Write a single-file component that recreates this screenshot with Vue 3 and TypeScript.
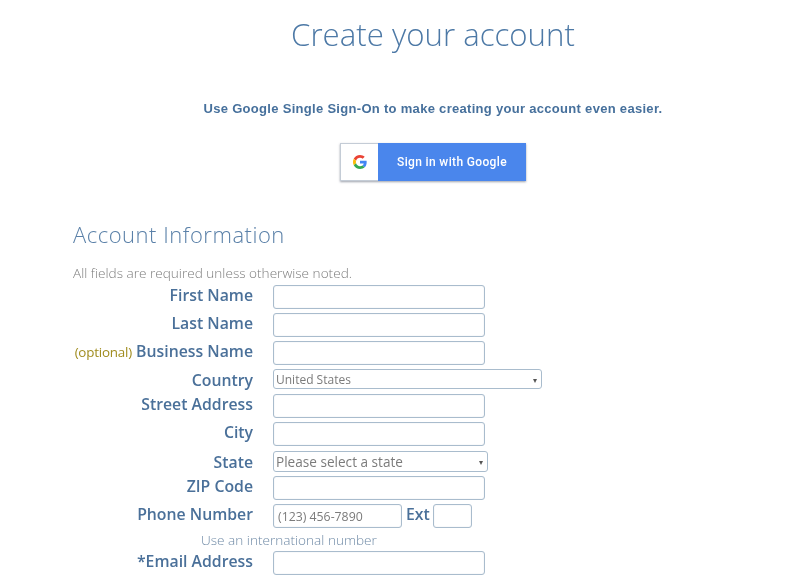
<script setup lang="ts">
interface Row {
  label: string
  optional?: boolean
  kind: 'input' | 'country' | 'state' | 'phone'
  rowClass: string
}
const rows: Row[] = [
  { label: 'First Name', kind: 'input', rowClass: 'r28' },
  { label: 'Last Name', kind: 'input', rowClass: 'r28' },
  { label: 'Business Name', optional: true, kind: 'input', rowClass: 'r29' },
  { label: 'Country', kind: 'country', rowClass: 'r24' },
  { label: 'Street Address', kind: 'input', rowClass: 'r28' },
  { label: 'City', kind: 'input', rowClass: 'r30' },
  { label: 'State', kind: 'state', rowClass: 'r24' },
  { label: 'ZIP Code', kind: 'input', rowClass: 'r28' },
  { label: 'Phone Number', kind: 'phone', rowClass: 'r26' },
]
</script>

<template>
  <main class="page">
    <h1 class="title">Create your account</h1>
    <p class="sso">Use Google Single Sign-On to make creating your account even easier.</p>
    <div class="google-wrap">
      <button class="google" type="button">
        <span class="g-box">
          <svg width="14" height="14" viewBox="0 0 48 48" aria-hidden="true">
            <path fill="#EA4335" d="M24 9.5c3.5 0 6.7 1.2 9.2 3.6l6.9-6.9C35.9 2.4 30.5 0 24 0 14.6 0 6.5 5.4 2.6 13.2l8 6.2C12.5 13.7 17.8 9.5 24 9.5z"/>
            <path fill="#4285F4" d="M46.9 24.5c0-1.6-.1-3.1-.4-4.5H24v9h12.9c-.6 3-2.2 5.5-4.8 7.2l7.7 6c4.5-4.2 7.1-10.3 7.1-17.7z"/>
            <path fill="#FBBC05" d="M10.6 28.6c-.5-1.4-.8-3-.8-4.6s.3-3.2.8-4.6l-8-6.2C.9 16.5 0 20.1 0 24s.9 7.5 2.6 10.8l8-6.2z"/>
            <path fill="#34A853" d="M24 48c6.5 0 11.9-2.1 15.9-5.8l-7.7-6c-2.2 1.4-4.9 2.3-8.2 2.3-6.2 0-11.5-4.2-13.4-9.9l-8 6.2C6.5 42.6 14.6 48 24 48z"/>
          </svg>
        </span>
        <span class="g-text">Sign in with Google</span>
      </button>
    </div>

    <section class="account">
      <h2 class="section-title">Account Information</h2>
      <p class="note">All fields are required unless otherwise noted.</p>
      <div class="form">
        <div v-for="row in rows" :key="row.label" class="row" :class="row.rowClass">
          <label class="label">
            <span v-if="row.optional" class="optional">(optional)</span>
            {{ row.label }}
          </label>
          <div v-if="row.kind === 'input'" class="input"></div>
          <div v-else-if="row.kind === 'country'" class="select country">
            <span>United States</span><span class="arrow">▾</span>
          </div>
          <div v-else-if="row.kind === 'state'" class="select state">
            <span>Please select a state</span><span class="arrow">▾</span>
          </div>
          <div v-else class="phone">
            <div class="input phone-input">(123) 456-7890</div>
            <span class="ext-label">Ext</span>
            <div class="input ext"></div>
          </div>
        </div>
        <p class="hint">Use an international number</p>
        <div class="row r28">
          <label class="label">*Email Address</label>
          <div class="input"></div>
        </div>
      </div>
    </section>
  </main>
</template>

<style>
html, body { margin: 0; background: #fff; overflow: hidden; }
</style>

<style scoped>
.page {
  width: 800px;
  height: 578px;
  overflow: hidden;
  font-family: "Open Sans", "Liberation Sans", sans-serif;
  box-sizing: border-box;
  padding-top: 12px;
  filter: blur(0.4px);
}
.title {
  margin: 0 0 0 66px;
  text-align: center;
  font-size: 31.2px;
  line-height: 44px;
  font-weight: 300;
  color: #4d79a6;
}
.sso {
  margin: 44px 0 0 66px;
  text-align: center;
  font-family: "Liberation Sans", Arial, sans-serif;
  font-size: 13px;
  letter-spacing: 0.3px;
  line-height: 18px;
  font-weight: 700;
  color: #46709c;
}
.google-wrap {
  margin: 25px 0 0 340px;
}
.google {
  display: flex;
  width: 186px;
  height: 38px;
  padding: 0;
  border: 0;
  background: #4a86ec;
  box-shadow: 0 1px 2px rgba(60, 70, 90, 0.5);
  font-family: "Roboto", "Liberation Sans", sans-serif;
}
.g-box {
  width: 38px;
  height: 38px;
  box-sizing: border-box;
  border: 1px solid #c4ccd6;
  border-right: 0;
  background: #fff;
  display: flex;
  align-items: center;
  justify-content: center;
}
.g-text {
  flex: 1;
  text-align: center;
  line-height: 38px;
  font-size: 12px;
  letter-spacing: 0.35px;
  font-weight: 500;
  color: #fff;
}
.account {
  margin: 38px 0 0 73px;
}
.section-title {
  margin: 0;
  font-size: 22px;
  line-height: 30px;
  font-weight: 300;
  letter-spacing: 0.52px;
  color: #5a80a8;
}
.note {
  margin: 15px 0 0;
  font-size: 13.6px;
  line-height: 18px;
  font-weight: 300;
  color: #7d7d7d;
}
.form {
  margin-top: 3px;
}
.row {
  display: flex;
  align-items: flex-start;
}
.r24 { height: 24px; }
.r26 { height: 26px; }
.r28 { height: 28px; }
.r29 { height: 29px; }
.r30 { height: 30px; }
.label {
  width: 180px;
  flex: none;
  text-align: right;
  font-size: 15.8px;
  line-height: 20px;
  font-weight: 600;
  color: #4a7099;
  white-space: nowrap;
}
.optional {
  font-size: 13.4px;
  font-weight: 400;
  letter-spacing: -0.2px;
  color: #a08c1e;
}
.input {
  width: 212px;
  height: 24px;
  box-sizing: border-box;
  margin-left: 20px;
  border: 1px solid #a9bccd;
  border-radius: 3px;
  background: #fff;
  box-shadow: inset 0 0 1px rgba(120, 140, 165, 0.4);
}
.select {
  margin-left: 20px;
  margin-top: -1px;
  box-sizing: border-box;
  display: flex;
  align-items: center;
  justify-content: space-between;
  border: 1px solid #a9bccd;
  border-radius: 3px;
  background: #fff;
  color: #7b7b7b;
  padding: 0 4px 0 2px;
}
.country {
  width: 269px;
  height: 20px;
  font-size: 12px;
}
.state {
  width: 215px;
  height: 21px;
  font-size: 13.6px;
}
.arrow {
  font-size: 8px;
  color: #555;
}
.phone {
  display: flex;
  align-items: flex-start;
}
.phone-input {
  width: 129px;
  height: 24px;
  padding-left: 4px;
  font-size: 12.3px;
  line-height: 24px;
  font-weight: 400;
  color: #7b7b7b;
}
.ext-label {
  margin-left: 4px;
  font-size: 15.8px;
  line-height: 20px;
  font-weight: 600;
  color: #4a7099;
}
.ext {
  width: 39px;
  margin-left: 3px;
}
.hint {
  margin: 1px 0 2px 128px;
  font-size: 13.6px;
  line-height: 18px;
  font-weight: 300;
  color: #6f8aa6;
}
</style>
